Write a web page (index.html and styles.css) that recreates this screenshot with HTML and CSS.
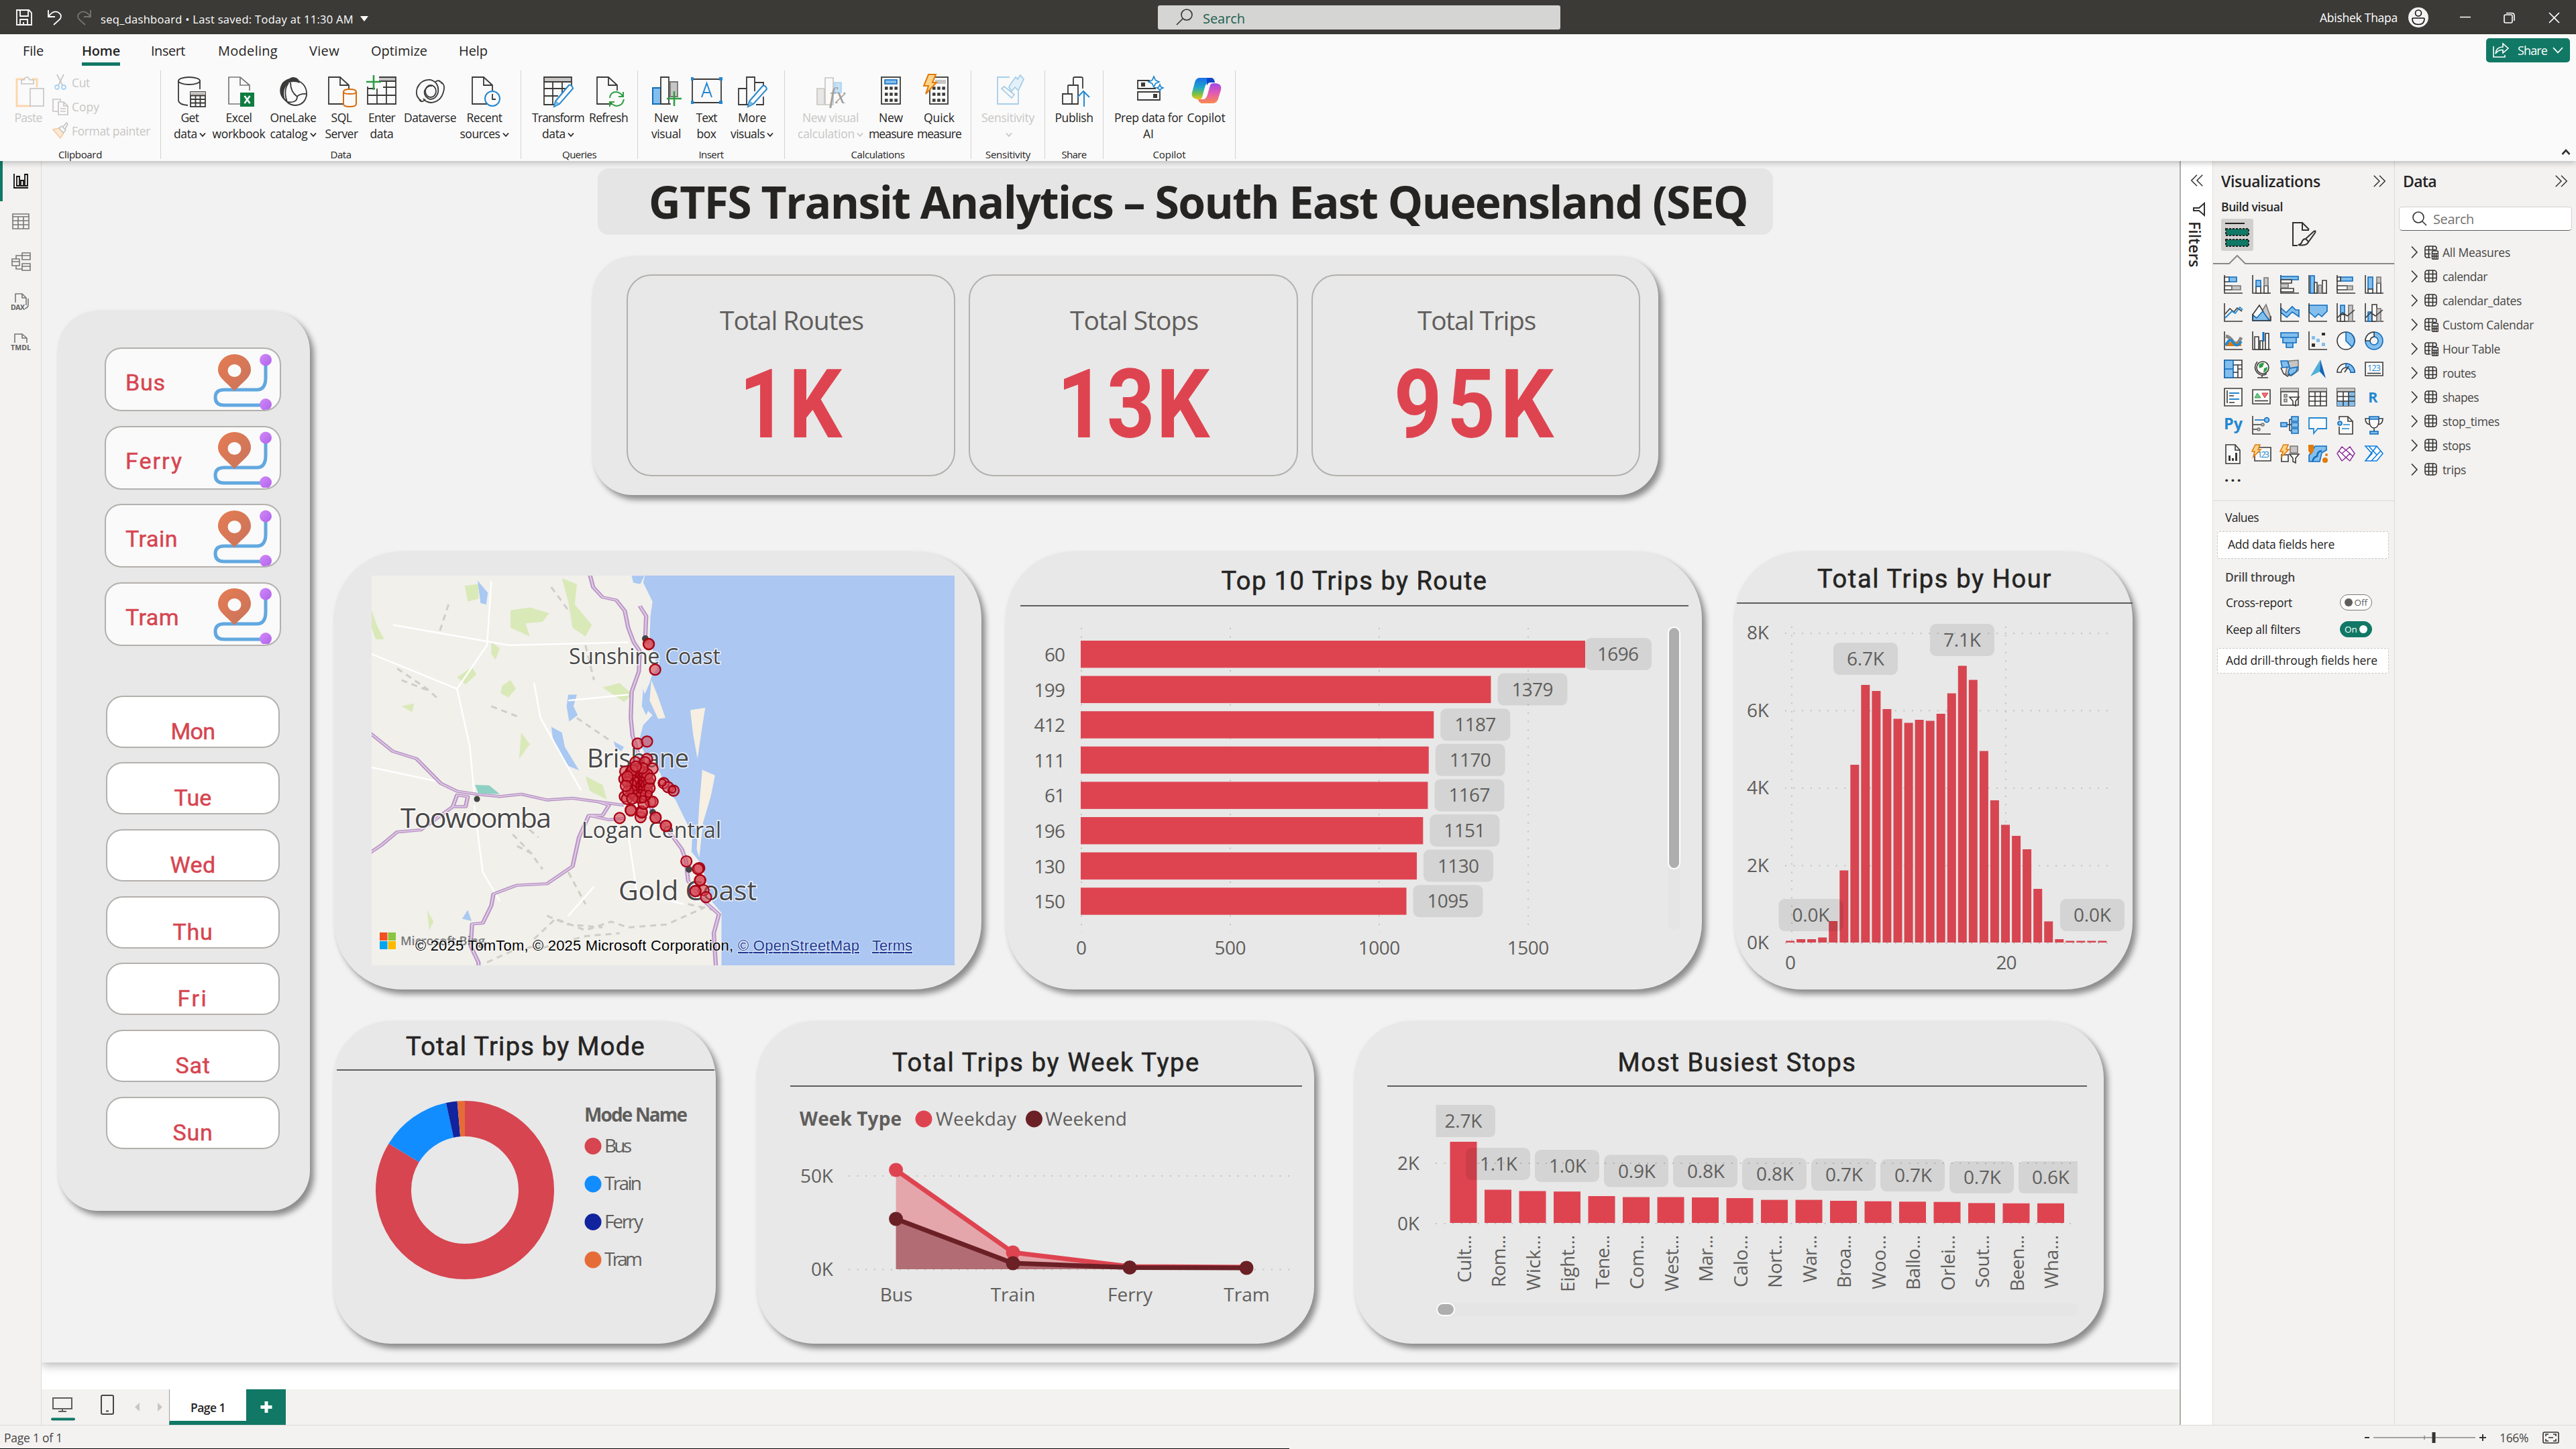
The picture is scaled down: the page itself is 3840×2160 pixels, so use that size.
FILE: index.html
```html
<!DOCTYPE html>
<html lang="en">
<head>
<meta charset="utf-8">
<title>seq_dashboard</title>
<link rel="stylesheet" href="styles.css">
</head>
<body>
<svg class="defs" width="0" height="0">
  <defs>
    <linearGradient id="pin" x1="0" y1="0" x2="1" y2="1"><stop offset="0" stop-color="#e57c52"/><stop offset="1" stop-color="#c9735c"/></linearGradient>
    <linearGradient id="dot" x1="0" y1="0" x2="1" y2="1"><stop offset="0" stop-color="#d08af8"/><stop offset="1" stop-color="#b062ea"/></linearGradient>
    <linearGradient id="cpA" x1="0" y1="0" x2="0" y2="1"><stop offset="0" stop-color="#1a6fe8"/><stop offset=".45" stop-color="#1fa6c8"/><stop offset=".75" stop-color="#7cc243"/><stop offset="1" stop-color="#f6c51c"/></linearGradient>
    <linearGradient id="cpB" x1="0" y1="0" x2="0" y2="1"><stop offset="0" stop-color="#a247e8"/><stop offset=".5" stop-color="#e35bb0"/><stop offset="1" stop-color="#fb8a4c"/></linearGradient>
    <symbol id="route" viewBox="0 0 90 90">
      <path d="M79 14V42Q79 60 66 60H17Q4 60 4 71.500Q4 83 17 83H74" fill="none" stroke="#62a8e0" stroke-width="5"/>
      <path fill-rule="evenodd" fill="url(#pin)" d="M32.500 62C20 48 8 42 8 30A24.500 23 0 0 1 57 30C57 42 45 48 32.500 62ZM32.500 22A10 9.500 0 1 0 32.500 41A10 9.500 0 1 0 32.500 22Z"/>
      <circle cx="79" cy="15.500" r="9" fill="url(#dot)"/><circle cx="79" cy="82" r="9" fill="url(#dot)"/>
    </symbol>
    <symbol id="tbl" viewBox="0 0 22 22"><rect x="2" y="2" width="17" height="17" rx="4" class="t"/><path class="t" d="M2 7.500H19M2 13.500H19M7.500 2V19M13.500 2V19"/></symbol>
    <symbol id="calc" viewBox="0 0 22 22"><path class="t" d="M19 7V5Q19 2 16 2H5Q2 2 2 5V16Q2 19 5 19H10M2 7.500H19M2 13.500H10M7.500 2V19M13.500 2V7"/><rect x="12.500" y="9" width="9" height="12.500" rx="2" class="t"/><path class="t" d="M12.500 13H21.500M15.500 13V21M18.500 13V21M12.500 17H21.500"/></symbol>
    <symbol id="more" viewBox="0 0 24 24"><path class="t" d="M3 3L12 12L3 21M12 3L21 12L12 21"/></symbol>
    <symbol id="less" viewBox="0 0 24 24"><path class="t" d="M12 3L3 12L12 21M21 3L12 12L21 21"/></symbol>
    <symbol id="exp" viewBox="0 0 12 20"><path class="t" d="M2 1.500L10 10L2 18.500"/></symbol>
    <symbol id="chev" viewBox="0 0 10 8"><path d="M1 1.500L5 6L9 1.500" fill="none" stroke="currentColor" stroke-width="1.800"/></symbol>
    <symbol id="doc" viewBox="0 0 48 52"><path class="k" d="M28 45H5V5H22L35 17V25M22 5V17H35"/></symbol>
  </defs>
</svg>

<header class="titlebar">
  <svg class="qa" width="120" height="28" viewBox="0 0 120 28">
    <path d="M2 3H20L24 7V25H2ZM7 3V12H19V3M7 25V17H18V25M12 25V21" fill="none" stroke="#fff" stroke-width="1.800"/>
    <path d="M49 3V13H59M49 13Q56 3 63 6Q71 10 66 17L57 25" fill="none" stroke="#fff" stroke-width="1.800"/>
    <path d="M112 3V13H102M112 13Q105 3 98 6Q90 10 95 17L104 25" fill="none" stroke="#777572" stroke-width="1.800"/>
  </svg>
  <span class="docname" data-w="377">seq_dashboard • Last saved: Today at 11:30 AM</span>
  <i class="caret"></i>
  <div class="gsearch"><svg width="26" height="28" viewBox="0 0 26 28"><circle cx="16" cy="10" r="8" fill="none" stroke="#333" stroke-width="1.600"/><path d="M10 16L1 25" stroke="#333" stroke-width="1.600"/></svg><span data-w="63">Search</span></div>
  <span class="user" data-w="116">Abishek Thapa</span>
  <svg class="avatar" width="30" height="30" viewBox="0 0 30 30"><circle cx="15" cy="15" r="15" fill="#f3f2f1"/><circle cx="15" cy="8.500" r="4.500" fill="none" stroke="#111" stroke-width="1.600"/><path d="M6 17Q6 16 7 16H23Q24 16 24 17Q24 25.500 15 25.500Q6 25.500 6 17Z" fill="none" stroke="#111" stroke-width="1.600"/></svg>
  <svg class="win" width="150" height="20" viewBox="0 0 150 20"><g fill="none" stroke="#fff" stroke-width="1.600"><path d="M1 9.500H17M134 3L149 18M149 3L134 18"/><rect x="67" y="6" width="12" height="12" rx="2"/><path d="M70 3.500H78Q82 3.500 82 7V15"/></g></svg>
</header>

<section class="ribbon">
  <nav class="tabs">
    <a class="t1" data-w="31">File</a><a class="t2 on" data-w="57">Home</a><a class="t3" data-w="51">Insert</a><a class="t4" data-w="89">Modeling</a><a class="t5" data-w="45">View</a><a class="t6" data-w="84">Optimize</a><a class="t7" data-w="43">Help</a>
    <button class="share"><svg width="26" height="24" viewBox="0 0 26 24" fill="none" stroke="#fff" stroke-width="1.600"><path d="M2 6V22H19V19"/><path d="M5 17Q6 7 16 7V2L24 9L16 16V11.500Q9 11 5 17Z"/></svg><span data-w="44">Share</span><svg width="16" height="10" viewBox="0 0 16 10" fill="none" stroke="#fff" stroke-width="1.800"><path d="M1 1L8 8.500L15 1"/></svg></button>
  </nav>
  <div class="groups">
    <div class="group g-clip">
      <div class="btns">
        <div class="rb off"><svg width="48" height="52" viewBox="0 0 48 52"><path d="M18 8H7V48H28" fill="none" stroke="#fbd7ae" stroke-width="3"/><path d="M30 8H37V20" fill="none" stroke="#fbd7ae" stroke-width="3"/><path class="d" d="M14 15V9H18Q19 5 22 5Q25 5 26 9H32V15Z"/><rect class="d" x="27" y="22" width="20" height="26"/></svg><span data-w="41">Paste</span></div>
        <ul class="mini">
          <li><svg width="20" height="26" viewBox="0 0 20 26"><path class="d" d="M5 1L13 17M15 1L7 17"/><circle cx="5" cy="20" r="3" class="db"/><circle cx="15" cy="20" r="3" class="db"/></svg><span data-w="27">Cut</span></li>
          <li><svg width="24" height="26" viewBox="0 0 24 26"><path class="d" d="M9 20H1V2H12V5M9 6H17L23 12V25H9ZM17 6V12H23M12 16H20M12 20H20"/></svg><span data-w="41">Copy</span></li>
          <li><svg width="24" height="26" viewBox="0 0 24 26"><path d="M1 11L10 9L17 16L12 24Z" fill="#fde8d2" stroke="#f5c9a0" stroke-width="1.500"/><path class="d" d="M10 9L14 6L20 12L16 16ZM16 7L21 1L23 3L19 10"/></svg><span data-w="117">Format painter</span></li>
        </ul>
      </div><h6 data-w="65">Clipboard</h6>
    </div>
    <div class="group g-data">
      <div class="btns">
        <div class="rb"><svg width="48" height="52" viewBox="0 0 48 52"><path class="k" d="M7 10V40Q8 46 21 47M39 10V23"/><ellipse class="k" cx="23" cy="10.500" rx="16" ry="5.500"/><rect class="w" x="25" y="27" width="22" height="22"/><path class="gf" d="M25 27H47V32H25Z"/><path class="k" d="M25 32.500H47M25 38H47M25 43.500H47M32.500 32V49M39.500 32V49"/></svg><span data-w="27">Get</span><span data-w="35">data<svg width="10" height="8"><use href="#chev"/></svg></span></div>
        <div class="rb"><svg width="48" height="52" viewBox="0 0 48 52"><path d="M28 45H9V5H26L40 17V25M26 5V17H40" fill="none" stroke="#797775" stroke-width="1.700"/><rect x="26" y="28" width="21" height="21" fill="#107c41"/><path d="M32.500 33L40.500 44M40.500 33L32.500 44" stroke="#fff" stroke-width="2.600"/></svg><span data-w="39">Excel</span><span data-w="79">workbook</span></div>
        <div class="rb"><svg width="48" height="52" viewBox="0 0 48 52"><path d="M24 5C18 8 17 11 17 14C8 22 9 34 14 42C5 36 2 26 6 17C9 10 15 8 24 5Z" fill="#3b3a39"/><path d="M16 14Q17 5 25 5Q33 6 34 14Q25 10 16 14Z" fill="#3b3a39"/><path class="k" d="M33 11Q45 18 44 32Q41 47 26 47Q16 46 12 38M20 13Q20 27 30 34Q34 29 44 30M15 42Q30 44 30 34M17 14Q9 24 15 42"/></svg><span data-w="69">OneLake</span><span data-w="56">catalog<svg width="10" height="8"><use href="#chev"/></svg></span></div>
        <div class="rb"><svg width="48" height="52" viewBox="0 0 48 52"><use href="#doc"/><path d="M27 27V45Q27 49 36 49Q46 49 46 45V27Q46 23 36.500 23Q27 23 27 27Q27 30 36.500 30Q46 30 46 27" fill="#fafafa" stroke="#d86b0b" stroke-width="2"/></svg><span data-w="31">SQL</span><span data-w="49">Server</span></div>
        <div class="rb"><svg width="48" height="52" viewBox="0 0 48 52"><path class="gf" d="M20 5H45V11H20Z"/><path class="k" d="M20 5H45V45H3V19M3 32H45M26 20H45M45 11H20M17 22V45M31 11V45M3 22H14"/><path d="M12 2V24M1 12H23" stroke="#2f9e44" stroke-width="2.600"/></svg><span data-w="40">Enter</span><span data-w="35">data</span></div>
        <div class="rb"><svg width="48" height="52" viewBox="0 0 48 52"><g class="k"><path d="M11 40Q1 34 5 21Q11 8 25 9Q38 13 36 28Q33 38 24 38Q14 34 16 25Q20 17 27 18"/><path d="M37 11Q48 14 44 27Q40 42 25 43Q17 42 14 37M32 12Q38 7 42 15M8 39Q12 44 17 38"/><ellipse cx="25" cy="26" rx="8" ry="9"/></g></svg><span data-w="78">Dataverse</span></div>
        <div class="rb"><svg width="48" height="52" viewBox="0 0 48 52"><use href="#doc" x="1"/><circle cx="36" cy="37" r="11" fill="#fafafa" stroke="#2488d0" stroke-width="2"/><path class="k" d="M36 30V38H41"/></svg><span data-w="53">Recent</span><span data-w="60">sources<svg width="10" height="8"><use href="#chev"/></svg></span></div>
      </div><h6 data-w="31">Data</h6>
    </div>
    <div class="group g-query">
      <div class="btns">
        <div class="rb"><svg width="48" height="52" viewBox="0 0 48 52"><path class="gf" d="M3 5H44V12H3Z"/><path class="k" d="M44 18V5H3V46H18M3 12H44M3 22H36M3 33H24M16 12V46M30 12V30"/><path d="M20 41L40 17Q45 16 46 22L26 45L18 49Z" fill="#fafafa" stroke="#2488d0" stroke-width="2"/><path d="M20 41L26 45L18 49Z" fill="#83beec" stroke="#2488d0"/></svg><span data-w="78">Transform</span><span data-w="35">data<svg width="10" height="8"><use href="#chev"/></svg></span></div>
        <div class="rb"><svg width="48" height="52" viewBox="0 0 48 52"><use href="#doc" x="2"/><path d="M26 36Q27 27 36 27Q42 28 45 33M46 27V34H39M47 38Q45 48 36 48Q30 47 27 42M26 49V42H33" fill="none" stroke="#2f9e44" stroke-width="2"/></svg><span data-w="58">Refresh</span></div>
      </div><h6 data-w="51">Queries</h6>
    </div>
    <div class="group g-insert">
      <div class="btns">
        <div class="rb"><svg width="48" height="52" viewBox="0 0 48 52"><path class="gf gs" d="M30 12H41V34H30Z"/><path d="M4 21H16V45H4Z" fill="#83beec" stroke="#0f6cbd" stroke-width="2"/><path class="w" d="M16 5H28V45H16Z"/><path class="k" d="M28 45H31"/><path d="M36 26V48M25 37H47" stroke="#2f9e44" stroke-width="2.600"/></svg><span data-w="36">New</span><span data-w="44">visual</span></div>
        <div class="rb"><svg width="48" height="52" viewBox="0 0 48 52"><path class="k" d="M3 8H46V43H3Z"/><path d="M1 5H5V10H1ZM43 5H48V10H43ZM1 40H5V45H1ZM43 40H48V45H43Z" fill="#2488d0"/><path d="M17 35L24.500 14L32 35M20 28H29" fill="none" stroke="#2488d0" stroke-width="2"/></svg><span data-w="31">Text</span><span data-w="29">box</span></div>
        <div class="rb"><svg width="48" height="52" viewBox="0 0 48 52"><path class="k" d="M4 22H16V46H4ZM16 46V5H28V26M28 13H41V18M16 46H20M30 46H41V34"/><path d="M20 41L40 18Q45 17 46 23L26 45L18 49Z" fill="#fafafa" stroke="#2488d0" stroke-width="2"/><path d="M20 41L26 45L18 49Z" fill="#83beec" stroke="#2488d0"/></svg><span data-w="42">More</span><span data-w="51">visuals<svg width="10" height="8"><use href="#chev"/></svg></span></div>
      </div><h6 data-w="37">Insert</h6>
    </div>
    <div class="group g-calc">
      <div class="btns">
        <div class="rb off"><svg width="56" height="52" viewBox="0 0 56 52"><path d="M8 22H19V46H8Z" fill="#e8e7e6" stroke="#c8c6c4" stroke-width="1.700"/><path d="M34 13H44V28H34Z" fill="#c7e0f4" stroke="#a9d3f2" stroke-width="1.700"/><path d="M20 6H32V46H20Z" fill="#fafafa" stroke="#c8c6c4" stroke-width="1.700"/><text x="26" y="44" class="fx">fx</text></svg><span data-w="84">New visual</span><span data-w="85">calculation<svg width="10" height="8"><use href="#chev"/></svg></span></div>
        <div class="rb"><svg width="48" height="52" viewBox="0 0 48 52"><rect class="w" x="10" y="5" width="28" height="40"/><path d="M15 9H33V15H15Z" fill="#83beec" stroke="#0f6cbd" stroke-width="1.600"/><path d="M15 21.500H34M15 30.500H34M15 39.500H34" stroke="#3b3a39" stroke-width="4.500" stroke-dasharray="4.500 2.700"/></svg><span data-w="36">New</span><span data-w="66">measure</span></div>
        <div class="rb"><svg width="48" height="52" viewBox="0 0 48 52"><rect class="w" x="10" y="5" width="27" height="40"/><path class="gf" d="M18 9H34V15H18Z"/><path d="M14 21.500H33M14 30.500H33M14 39.500H33" stroke="#3b3a39" stroke-width="4.500" stroke-dasharray="4.500 2.700"/><path d="M8 1H19L14 13H20L4 30L8 18H1Z" fill="#ffd388" stroke="#e07b0c" stroke-width="2"/></svg><span data-w="46">Quick</span><span data-w="66">measure</span></div>
      </div><h6 data-w="80">Calculations</h6>
    </div>
    <div class="group g-sens">
      <div class="btns"><div class="rb off"><svg width="48" height="52" viewBox="0 0 48 52"><g fill="none" stroke="#a6cfe8" stroke-width="1.800"><path d="M26 5H8V45H39V26"/><path d="M14 22L18 19L33 31L29 36Z"/><path d="M27 16L35 5L38 8L42 2L47 8L39 25L34 20L29 26L25 20Z" fill="#e4f1f9"/></g></svg><span data-w="79">Sensitivity</span><span><svg width="10" height="8"><use href="#chev"/></svg></span></div></div><h6 data-w="67">Sensitivity</h6>
    </div>
    <div class="group g-share">
      <div class="btns"><div class="rb"><svg width="48" height="52" viewBox="0 0 48 52"><path class="k" d="M7 30H21V45H7ZM15 30V18Q15 17 16 17H30V45H21M23 17V7Q23 5 25 5H34Q37 5 37 7V22"/><path d="M39 49V26M29 35L38 26L47 35" fill="none" stroke="#2488d0" stroke-width="2"/></svg><span data-w="57">Publish</span></div></div><h6 data-w="37">Share</h6>
    </div>
    <div class="group g-cop">
      <div class="btns">
        <div class="rb"><svg width="48" height="52" viewBox="0 0 48 52"><path class="k" d="M26 10H8V22H34V20M8 27H41V39H8Z"/><path d="M13 13H19V19H13ZM31 30H37V36H31Z" fill="#3b3a39"/><path d="M32 4L34.500 9.500L40 12L34.500 14.500L32 20L29.500 14.500L24 12L29.500 9.500ZM41 16L42.500 19.500L46 21L42.500 22.500L41 26L39.500 22.500L36 21L39.500 19.500Z" fill="#fafafa" stroke="#2488d0" stroke-width="1.700"/></svg><span data-w="102">Prep data for</span><span data-w="16">AI</span></div>
        <div class="rb"><svg width="48" height="52" viewBox="0 0 48 52"><path d="M14 6H32Q36 7 37 13H28Q24 13 22 20L18 35Q16 40 10 38Q1 36 3 28L7 13Q9 6 14 6Z" fill="url(#cpA)"/><path d="M25 6H32Q36 7 37 13H29Q26 14 25 18Z" fill="#1246c8"/><path d="M34 44H17Q13 43 12 38H20Q24 38 26 31L30 17Q31 14 36 14Q48 14 46 24L42 37Q40 44 34 44Z" fill="url(#cpB)"/></svg><span data-w="57">Copilot</span></div>
      </div><h6 data-w="49">Copilot</h6>
    </div>
    <svg class="collapse" width="14" height="10" viewBox="0 0 14 10"><path d="M1.500 8L7 2L12.500 8" fill="none" stroke="#333" stroke-width="2.600"/></svg>
  </div>
</section>

<main class="work">
  <aside class="rail">
    <div class="on"><svg width="28" height="28" viewBox="0 0 28 28"><path d="M4 3V24H25M8 7H12V21H8ZM14 13H18V21H14ZM20 4H24V21H20Z" fill="none" stroke="#111" stroke-width="1.800"/></svg></div>
    <div><svg width="28" height="28" viewBox="0 0 28 28" class="rl"><path d="M2 3H26V25H2ZM2 7H26M2 13H26M2 19H26M10 7V25M18 7V25"/></svg></div>
    <div><svg width="30" height="30" viewBox="0 0 30 30" class="rl"><path d="M2 11H13V21H2ZM2 15H13M17 2H29V12H17ZM17 6H29M17 18H29V28H17ZM17 22H29M8 11V6H17M8 21V26H17"/></svg></div>
    <div><svg width="30" height="30" viewBox="0 0 30 30" class="rl"><path d="M7 16V3H17L23 9V20M17 3V9H23M26 10V19Q26 24 21 25"/><text x="0" y="27" textLength="21">DAX</text></svg></div>
    <div><svg width="30" height="30" viewBox="0 0 30 30" class="rl"><path d="M6 16V3H17L24 9V16M17 3V9H24"/><text x="0" y="27" textLength="30">TMDL</text></svg></div>
  </aside>
  <section class="stage">
    <div class="canvas">
      <div class="card slicers">
        <ul class="modes">
          <li><span data-w="60">Bus</span><svg width="90" height="90"><use href="#route"/></svg></li>
          <li><span data-w="86">Ferry</span><svg width="90" height="90"><use href="#route"/></svg></li>
          <li><span data-w="78">Train</span><svg width="90" height="90"><use href="#route"/></svg></li>
          <li><span data-w="80">Tram</span><svg width="90" height="90"><use href="#route"/></svg></li>
        </ul>
        <ul class="days"><li data-w="66">Mon</li><li data-w="56">Tue</li><li data-w="68">Wed</li><li data-w="60">Thu</li><li data-w="46">Fri</li><li data-w="52">Sat</li><li data-w="60">Sun</li></ul>
      </div>
      <div class="board">
        <h1><span data-w="1638">GTFS Transit Analytics – South East Queensland (SEQ</span></h1>
        <div class="card kpis">
          <div class="kpi"><p data-w="214">Total Routes</p><strong data-w="156" data-sx=".88">1K</strong></div>
          <div class="kpi"><p data-w="191">Total Stops</p><strong data-w="230" data-sx=".88">13K</strong></div>
          <div class="kpi"><p data-w="176">Total Trips</p><strong data-w="246" data-sx=".88">95K</strong></div>
        </div>
        <div class="row top">
          <div class="card c-map">
            <svg id="map" width="869" height="581" viewBox="554 858 869 581">
              <rect x="554" y="858" width="869" height="581" fill="#abc7f2"/>
              <g transform="translate(490 810) scale(.6378 .4337)">
                <path fill="#f1f0eb" d="M100 100H741L735 135L757 200L752 250L750 330L762 390L768 430L755 455L750 480L738 520L735 560L757 590L735 625L725 680L738 720L760 760L775 790L790 850L810 880L830 940L850 1000L848 1060L870 1100L882 1160L895 1230L918 1270V1460H90V100Z"/>
                <path fill="#f6efe2" d="M754 470L768 520L787 600L770 603L750 540ZM845 573L880 565L872 640L862 740L852 660ZM873 778L903 797L893 870L875 960L866 1080L860 1050L866 900Z"/>
                <g class="green">
                  <path d="M425 230L470 220L515 240L500 270L460 275L470 320L425 290ZM545 120L580 140L575 210L615 280L600 320L570 290L560 200ZM318 145L350 140L350 190L325 200ZM405 490L425 470L437 500L420 530L402 515ZM300 460L335 425L345 450L320 485ZM640 495L680 480L710 520L690 545ZM100 230L115 290L130 330L110 330L100 290ZM380 340L400 360L390 400L380 380ZM600 800L640 830L650 880L610 850ZM450 650L470 690L445 740ZM170 560L200 550L195 580ZM230 1260L245 1300L235 1330ZM720 800L760 880L740 900Z"/>
                </g>
                <path fill="#a9c8f2" d="M560 520L580 520L572 560L582 590L562 612L556 560ZM520 630L545 650L552 700L585 780L560 765L538 720L524 670ZM348 128L372 170L368 210L355 205ZM708 111L738 111L728 140L712 135ZM666 680L690 700L684 715L670 700ZM312 1290L325 1260L334 1298ZM735 500L748 570L742 590L732 560Z"/>
                <g class="hill">
                  <path d="M160 430L230 500L260 540M170 470L240 510M430 1000L470 1060L500 1120M440 1040L480 1070M450 960L490 1010M520 150L560 230M600 350L620 470M280 210L260 300M380 560L450 600M580 600L660 680M480 1360L530 1290L600 1330L660 1300L700 1320L790 1310L880 1250M500 1390L600 1350L680 1340M370 1440L430 1400L500 1380M510 1280L560 1310L640 1320M560 1130L600 1240M840 1240L900 1260"/>
                </g>
                <path class="minor" d="M380 130L370 350L300 500L330 700L340 860M480 480L495 600L590 850M100 380L300 500M560 540L700 520M340 900L360 1130L400 1230M150 280L420 350L700 340M100 770L260 820M700 1000L720 1200L830 1240M620 1180L560 1280"/>
                <g class="road"><g id="roads">
                  <path d="M610 105L618 150L640 185L672 195L692 232L700 290L713 340L727 370L725 440L708 510L706 600L710 660L725 730L735 800"/>
                  <path d="M727 215L742 250L740 320L745 345"/>
                  <path d="M95 650L150 715L205 740L262 825L300 852L345 862L400 870L450 862L510 882L570 876L630 888L690 900"/>
                  <path d="M95 1065L125 1035L160 992L215 985L290 905L320 905L325 870L300 865L290 905"/>
                  <path d="M630 888L655 900L640 935L608 935L585 1010L570 1110L510 1170L440 1175L385 1205L380 1245L360 1305L335 1308L332 1385L350 1440V1460M608 935L655 950L690 945"/>
                  <path d="M735 850L760 930L800 1000L825 1050L835 1090L840 1160L870 1220L912 1275L900 1340L905 1455"/>
                </g></g>
                <use href="#roads" class="road2"/>
                <path fill="#8fd0c4" d="M342 830L375 832L400 862L350 860Z"/>
              </g>
              <g fill="#444"><circle cx="711" cy="1191" r="4.500"/><circle cx="962" cy="952" r="5"/><circle cx="973" cy="1211" r="5"/><circle cx="1027" cy="1296" r="5"/></g>
              <g class="place">
                <text x="848" y="990" textLength="226" font-size="32">Sunshine Coast</text>
                <text x="875" y="1144" textLength="152" font-size="38">Brisbane</text>
                <text x="597" y="1234" textLength="225" font-size="41">Toowoomba</text>
                <text x="867" y="1249" textLength="208" font-size="32">Logan Central</text>
                <text x="922" y="1342" textLength="206" font-size="41">Gold Coast</text>
              </g>
              <g id="pts" fill="#d64550" fill-opacity=".6" stroke="#a80013" stroke-width="2.200"></g>
              <path fill="#f25022" d="M566 1390h11.500v12H566z"/><path fill="#8bc53f" d="M578.500 1390H590v12h-11.500z"/><path fill="#00a4ef" d="M566 1403h11.500v12H566z"/><path fill="#ffb900" d="M578.500 1403H590v12h-11.500z"/>
              <text x="597" y="1409" textLength="126" font-size="18" font-weight="600" fill="#77777a" class="ui">Microsoft Bing</text>
              <g class="legal"><text x="619" y="1417" textLength="474">© 2025 TomTom, © 2025 Microsoft Corporation,</text><text x="1100" y="1417" textLength="181" class="lnk">© OpenStreetMap</text><text x="1300" y="1417" textLength="60" class="lnk">Terms</text></g>
            </svg>
          </div>
          <div class="card c-route"><h2><span data-w="397">Top 10 Trips by Route</span></h2><svg id="routeChart" width="1038" height="571" viewBox="1499 904 1038 571"></svg></div>
          <div class="card c-hour"><h2><span data-w="350">Total Trips by Hour</span></h2><svg id="hourChart" width="594" height="575" viewBox="2585 900 594 575"></svg></div>
        </div>
        <div class="row bottom">
          <div class="card c-mode"><h2><span data-w="357">Total Trips by Mode</span></h2>
            <svg width="570" height="407" viewBox="497 1596 570 407">
              <g id="donut" fill="none" stroke-width="53" transform="rotate(-90 693 1774)"></g>
              <g class="lab"><text x="871" y="1672" font-weight="700" textLength="154">Mode Name</text>
              <text x="901" y="1718" textLength="41">Bus</text><text x="901" y="1774" textLength="56">Train</text><text x="901" y="1831" textLength="58">Ferry</text><text x="901" y="1887" textLength="57">Tram</text></g>
              <circle cx="884" cy="1708.500" r="12.500" fill="#d64550"/><circle cx="884" cy="1765" r="12.500" fill="#118dff"/><circle cx="884" cy="1821.500" r="12.500" fill="#12239e"/><circle cx="884" cy="1878" r="12.500" fill="#e66c37"/>
            </svg></div>
          <div class="card c-week"><h2><span data-w="459">Total Trips by Week Type</span></h2>
            <svg width="831" height="383" viewBox="1128 1620 831 383">
              <path class="grid" d="M1265 1753H1928M1265 1892.500H1928"/>
              <path d="M1335.600 1744L1510 1867L1684 1889L1858 1889.500V1892H1335.600Z" fill="#de4450" fill-opacity=".4"/>
              <path d="M1335.600 1817L1510 1883L1684 1889.500L1858 1890V1892H1335.600Z" fill="#6b2026" fill-opacity=".42"/>
              <g fill="#de4450"><path d="M1335.600 1744L1510 1867L1684 1888L1858 1889" fill="none" stroke="#de4450" stroke-width="7"/><circle cx="1335.600" cy="1744" r="10.500"/><circle cx="1510" cy="1867" r="10.500"/><circle cx="1377" cy="1668" r="12.500"/></g>
              <g fill="#6b2026"><path d="M1335.600 1817L1510 1883L1684 1889.500L1858 1890" fill="none" stroke="#6b2026" stroke-width="7"/><circle cx="1335.600" cy="1817" r="10.500"/><circle cx="1510" cy="1883" r="10.500"/><circle cx="1684" cy="1889.500" r="10.500"/><circle cx="1858" cy="1890" r="10.500"/><circle cx="1541.500" cy="1668" r="12.500"/></g>
              <g class="lab"><text x="1192" y="1678" font-weight="700" textLength="152">Week Type</text><text x="1395" y="1678" textLength="120">Weekday</text><text x="1558" y="1678" textLength="122">Weekend</text>
              <text x="1193" y="1763" textLength="49">50K</text><text x="1209" y="1902" textLength="33">0K</text>
              <g text-anchor="middle"><text x="1336" y="1940">Bus</text><text x="1510" y="1940">Train</text><text x="1684.500" y="1940">Ferry</text><text x="1858.500" y="1940">Tram</text></g></g>
            </svg></div>
          <div class="card c-stops"><h2><span data-w="356">Most Busiest Stops</span></h2><svg id="stopChart" width="1117" height="383" viewBox="2019 1620 1117 383"></svg></div>
        </div>
      </div>
    </div>
    <footer class="pages">
      <svg width="36" height="40" viewBox="0 0 36 40"><path d="M3 5H31V21H3ZM17 21V24M11 25H23" fill="none" stroke="#605e5c" stroke-width="2"/><path d="M2 36.500H34" stroke="#117865" stroke-width="4" stroke-linecap="round"/></svg>
      <svg class="phone" width="22" height="32" viewBox="0 0 22 32"><rect x="2" y="2" width="18" height="28" rx="2" fill="none" stroke="#484644" stroke-width="2"/><path d="M9 25.500H13" stroke="#484644" stroke-width="2"/></svg>
      <svg class="arrows" width="42" height="14" viewBox="0 0 42 14"><path d="M7 0V13L0 6.500ZM34 0V13L41 6.500Z" fill="#c8c6c4"/></svg>
      <b class="page"><span data-w="52">Page 1</span></b><b class="add"><svg width="20" height="20" viewBox="0 0 20 20"><path d="M10 1V18M1.500 9.500H18.500" stroke="#fff" stroke-width="5"/></svg></b>
    </footer>
  </section>
  <aside class="filters"><svg width="22" height="22"><use href="#less"/></svg><svg width="20" height="22" viewBox="0 0 20 22"><path class="t bold" d="M18 2V20L10 13H2V9H10Z"/></svg><span>Filters</span></aside>
  <aside class="viz">
    <header><h3 data-w="148">Visualizations</h3><svg width="22" height="22"><use href="#more"/></svg></header>
    <h4 data-w="92">Build visual</h4>
    <div class="modesw">
      <div class="sel"><svg width="48" height="48" viewBox="0 0 48 48"><path d="M6 7H35" stroke="#222" stroke-width="2"/><path d="M7 15H41V25H7ZM7 31H41V41H7Z" fill="#117865" stroke="#222" stroke-width="2" stroke-dasharray="3 2"/></svg></div>
      <svg width="40" height="40" viewBox="0 0 40 40"><path class="t bold" d="M10 36H3V2H17L27 12M17 2V13H27M22 26L34 15Q38 13 36 17L26 31Q23 37 11 35Q16 34 17 29Q19 26 22 26L26 30"/></svg>
    </div>
    <svg class="notch" width="270" height="16" viewBox="0 0 270 16"><path d="M0 13H24L36 1L48 13H270" fill="none" stroke="#8a8886" stroke-width="2"/></svg>
    <div id="vizgrid" class="vizgrid"></div>
    <p class="dots">···</p>
    <div class="wells">
      <h5 data-w="50">Values</h5><div class="well first"><span data-w="159">Add data fields here</span></div>
      <h5 class="b" data-w="104">Drill through</h5>
      <p class="tg"><span data-w="99">Cross-report</span><i class="sw"><u></u><em>Off</em></i></p>
      <p class="tg"><span data-w="111">Keep all filters</span><i class="sw act"><em>On</em><u></u></i></p>
      <div class="well second"><span data-w="226">Add drill-through fields here</span></div>
    </div>
  </aside>
  <aside class="data">
    <header><h3 data-w="50">Data</h3><svg width="22" height="22"><use href="#more"/></svg></header>
    <div class="dsearch"><svg width="24" height="24" viewBox="0 0 24 24"><circle cx="10" cy="10" r="8" class="t"/><path class="t" d="M16 16L22 22"/></svg><span data-w="61">Search</span></div>
    <ul>
      <li><svg width="12" height="20"><use href="#exp"/></svg><svg width="22" height="22"><use href="#calc"/></svg><span data-w="101">All Measures</span></li>
      <li><svg width="12" height="20"><use href="#exp"/></svg><svg width="22" height="22"><use href="#tbl"/></svg><span data-w="67">calendar</span></li>
      <li><svg width="12" height="20"><use href="#exp"/></svg><svg width="22" height="22"><use href="#tbl"/></svg><span data-w="118">calendar_dates</span></li>
      <li><svg width="12" height="20"><use href="#exp"/></svg><svg width="22" height="22"><use href="#calc"/></svg><span data-w="136">Custom Calendar</span></li>
      <li><svg width="12" height="20"><use href="#exp"/></svg><svg width="22" height="22"><use href="#calc"/></svg><span data-w="86">Hour Table</span></li>
      <li><svg width="12" height="20"><use href="#exp"/></svg><svg width="22" height="22"><use href="#tbl"/></svg><span data-w="50">routes</span></li>
      <li><svg width="12" height="20"><use href="#exp"/></svg><svg width="22" height="22"><use href="#tbl"/></svg><span data-w="54">shapes</span></li>
      <li><svg width="12" height="20"><use href="#exp"/></svg><svg width="22" height="22"><use href="#tbl"/></svg><span data-w="85">stop_times</span></li>
      <li><svg width="12" height="20"><use href="#exp"/></svg><svg width="22" height="22"><use href="#tbl"/></svg><span data-w="42">stops</span></li>
      <li><svg width="12" height="20"><use href="#exp"/></svg><svg width="22" height="22"><use href="#tbl"/></svg><span data-w="35">trips</span></li>
    </ul>
  </aside>
</main>
<footer class="status"><span data-w="87">Page 1 of 1</span>
  <svg class="zoom" width="182" height="20" viewBox="0 0 182 20"><path d="M1 10H8M172 10H182M177 5V15" stroke="#333" stroke-width="2"/><path d="M14 10H166M90 7V13" stroke="#8a8886" stroke-width="1.500"/><path d="M104 2V18" stroke="#333" stroke-width="5"/></svg>
  <span class="pct" data-w="43">166%</span>
  <svg class="fit" width="26" height="18" viewBox="0 0 26 18"><rect x="1" y="1" width="23" height="16" rx="2" class="t"/><path class="t" d="M5 7V4H9M16 4H20V7M20 11V14H16M9 14H5V11M9 9H16"/></svg>
</footer>
<script src="app.js"></script>
</body>
</html>
```

FILE: styles.css
```css
*{box-sizing:border-box;margin:0;padding:0}
body{width:3840px;height:2160px;overflow:hidden;display:grid;grid-template-rows:51px 189px 1884px 36px;background:#f3f2f1;color:#252423;font-family:"Open Sans","Noto Sans",sans-serif;font-size:17.5px}
ul{list-style:none}
svg{display:block;flex:none}
.defs{position:absolute}
[data-w]{white-space:nowrap}
.t{fill:none;stroke:#323130;stroke-width:1.6}
.bold{stroke-width:2}
.k{fill:none;stroke:#3b3a39;stroke-width:1.8}
.w{fill:#fafafa;stroke:#3b3a39;stroke-width:1.8}
.gf{fill:#c8c6c4}
.gs{stroke:#797775;stroke-width:1.8}
.d{fill:#fafafa;stroke:#c8c6c4;stroke-width:1.7}
.db{fill:none;stroke:#a9d3f2;stroke-width:1.8}
.fx{font:italic 34px "Liberation Serif",serif;fill:#a19f9d}

.titlebar{background:#3b3a37;color:#fff;display:flex;align-items:center;padding-left:23px;font-size:16.5px}
.qa{margin-right:7px}
.docname{width:377px;padding-top:6px}
.caret{border:6px solid transparent;border-top:8px solid #fff;border-bottom:0;margin:4px 0 0 10px}
.gsearch{margin-left:1177px;width:600px;height:36px;border-radius:3px;background:#d5d5d3;display:flex;align-items:center;padding-left:27px;gap:14px;color:#1d5f50;font-size:20px}
.gsearch span{padding-top:3px}
.user{margin-left:1132px;width:116px;font-size:17.5px}
.avatar{margin-left:16px}
.win{margin-left:46px}

.ribbon{background:#fafafa;box-shadow:0 3px 8px rgba(0,0,0,.22);position:relative;z-index:2}
.tabs{height:54px;display:flex;align-items:flex-start;font-size:20px;padding-left:34px}
.tabs a{height:47px;padding-top:11px;line-height:27px;margin-right:48px}
.tabs .t1{width:31px;margin-right:57px}.tabs .t2{width:57px;margin-right:46px}
.tabs .t3{width:51px;margin-right:49px}.tabs .t4{width:89px;margin-right:47px}
.tabs .t5{width:45px;margin-right:47px}.tabs .t6{width:84px;margin-right:47px}.tabs .t7{width:43px}
.tabs .on{font-weight:600;border-bottom:5px solid #117865}
.share{margin:6px 9px 0 auto;width:125px;height:36px;border:0;border-radius:5px;background:#117865;color:#fff;font:18px "Open Sans",sans-serif;display:flex;align-items:center;padding-left:9px;gap:8px}
.share span{margin-left:4px}
.groups{display:flex;height:132px;position:relative}
.group{border-right:1.5px solid #d5d3d1;display:flex;flex-direction:column;justify-content:space-between}
.group h6{font-size:15px;font-weight:400;text-align:center;line-height:20px;margin-bottom:-3px;align-self:center}
.btns{display:grid;padding-top:5px;justify-content:center}
.rb{display:flex;flex-direction:column;align-items:center;line-height:24px;font-size:17.5px}
.rb>span:first-of-type{margin-top:1px}
.rb span svg{display:inline-block;margin-left:3px;vertical-align:1px}
.rb span{min-height:24px}
.off{color:#c8c6c4}
.g-clip{width:240px}.g-clip .btns{grid-template-columns:56px 150px;justify-content:start;padding-left:14px}
.mini{color:#c8c6c4;padding-left:8px;font-size:17.5px;margin-top:-5px}
.mini li{height:36px;display:flex;align-items:center;gap:5px}
.mini li svg{width:24px}
.g-data{width:537px}.g-data .btns{grid-template-columns:70px 76px 86px 58px 62px 82px 80px;justify-content:start;padding-left:8px}
.g-query{width:174px}.g-query .btns{grid-template-columns:82px 68px;justify-content:start;padding-left:14px}
.g-insert{width:219px}.g-insert .btns{grid-template-columns:64px 56px 80px;justify-content:start;padding-left:10px}
.g-calc{width:278px}.g-calc .btns{grid-template-columns:106px 74px 70px;justify-content:start;padding-left:15px}
.g-sens{width:110px}.g-share{width:87px}
.g-cop{width:197px}.g-cop .btns{grid-template-columns:108px 64px;justify-content:start;padding-left:13px}
.collapse{margin:117px 8px 0 auto}

.work{display:grid;grid-template-columns:62px 3187px 50px 271px 270px}
.rail{border-right:1.5px solid #dcdad8;display:flex;flex-direction:column}
.rail div{height:60px;display:grid;place-items:center}
.rail .on{border-left:4px solid #117865;padding-right:4px}
.rl{fill:none;stroke:#797775;stroke-width:1.6}
.rl text{font:700 10.5px "Open Sans",sans-serif;fill:#605e5c;stroke:none}
.stage{background:#fff;display:flex;flex-direction:column}
.canvas{height:1791px;background:#f2f2f2;box-shadow:0 4px 14px rgba(0,0,0,.3);clip-path:inset(0 0 -24px 0);display:flex}
.card{background:#e8e8e8;border-radius:60px;box-shadow:6px 7px 9px rgba(0,0,0,.42),0 0 5px #ececec}
.slicers{width:376px;height:1342px;margin:223px 0 0 24px;padding:55px 0 0 70px;flex:none}
.modes{display:grid;gap:21.5px}
.modes li{width:263px;height:95px;border:2px solid #b3b0ad;border-radius:25px;background:#fafafa;display:flex;justify-content:space-between;align-items:center;padding:0 10px 0 29px;overflow:hidden;color:#d64550;font:400 34px Roboto,sans-serif;-webkit-text-stroke:.5px #d64550}
.modes span{padding-top:9px}
.days{display:grid;gap:21.7px;margin:74px 0 0 2px}
.days li{width:259px;height:78px;border:2px solid #b3b0ad;border-radius:25px;background:#fff;color:#d64550;font:400 34px/102px Roboto,sans-serif;-webkit-text-stroke:.5px #d64550;text-align:center}
.board{margin-left:35px;flex:1;min-width:0}
h1{width:1752px;height:99px;margin:11px 0 0 394px;border-radius:16px;background:#e5e5e5;font-size:66px;line-height:99px;font-weight:700;padding-left:76px}
.kpis{width:1589px;height:356px;margin:32px 0 0 386px;padding:27px 27px 28px 51px;display:grid;grid-template-columns:490px 491px 490px;gap:20px}
.kpi{border:2px solid #b3b0ad;border-radius:37px;display:flex;flex-direction:column;align-items:center;padding:38px 0 0 2px}
.kpi p{font-size:39px;line-height:56px;color:#605e5c}
.kpi strong{font:700 142px/142px Roboto,sans-serif;color:#de4450;margin-top:28px}
.row{display:flex}
.top{margin-top:84px;height:653px}
.bottom{margin-top:47px;height:481px}
.top .card{border-radius:100px}
.bottom .card{border-radius:85px}
.card h2{font:400 38px/40px Roboto,sans-serif;-webkit-text-stroke:.6px #252423;text-align:center;border-bottom:2px solid #605e5c;color:#252423}
.c-map{width:965px;padding:36px 0 0 56px;margin-left:1px}
.c-route{width:1038px;margin-left:36px}.c-route h2{margin:0 20px 0 22px;height:82px;padding-top:24px}
.c-hour{width:594px;margin-left:48px}.c-hour h2{margin:0 0 0 4px;height:78px;padding-top:21px}
.c-mode{width:570px}.c-mode h2{margin:0 2px 0 5px;height:74px;padding-top:18px}
.c-week{width:831px;margin-left:61px}.c-week h2{margin:0 18px 0 50px;height:98px;padding-top:42px}
.c-stops{width:1117px;margin-left:60px}.c-stops h2{margin:0 25px 0 49px;height:98px;padding-top:42px}
.green path{fill:#d6e8b2;opacity:.9}
.hill{fill:none;stroke:#b9b9b0;stroke-width:3;stroke-dasharray:9 7;opacity:.6}
.hill path,.minor{vector-effect:non-scaling-stroke}
.minor{fill:none;stroke:#fff;stroke-width:2.5}
.road,.road2{fill:none;stroke-linejoin:round}
.road{stroke:#b995c4;stroke-width:10px}
.road2{stroke:#e2cde8;stroke-width:3.5px}
.place{font-family:"Open Sans",sans-serif;fill:#484848;stroke:#fff;stroke-width:3px;stroke-opacity:.8;paint-order:stroke;font-weight:500}
.ui{font-family:"Open Sans",sans-serif}
.legal{font:22px "Liberation Sans",Arial,sans-serif;fill:#000;paint-order:stroke;stroke:#fff;stroke-opacity:.6;stroke-width:2px}
.lnk{fill:#1f3a93;text-decoration:underline}
.lab,.lab text{font-family:"Open Sans","Noto Sans",sans-serif;font-size:28px;fill:#605e5c}
.grid{fill:none;stroke:#c4c2c0;stroke-width:2;stroke-dasharray:2 10.6}
.pages{margin-top:40px;height:53px;background:#f3f2f1;display:flex;align-items:center;padding-left:14px}
.pages>svg:first-child{margin-top:2px}
.phone{margin:-8px 0 0 37px}
.arrows{margin-left:30px}
.page{margin-left:9px;width:115px;height:53px;border-left:1.5px solid #a19f9d;background:#fff;border-bottom:6px solid #117865;font-size:17.5px;font-weight:600;text-align:center;line-height:55px}
.add{width:59px;height:53px;background:#117865;display:grid;place-items:center}

.filters{background:#fff;border-left:2px solid #b1afad;border-right:1.5px solid #e1dfdd;display:flex;flex-direction:column;align-items:center;padding-top:18px}
.filters svg:nth-child(2){margin:21px -6px 0 0}
.filters span{writing-mode:vertical-rl;font-size:23px;font-weight:600;margin:7px 6px 0 0;line-height:30px}
.viz{border-right:1.5px solid #dcdad8}
.viz header,.data header{height:60px;display:flex;align-items:center;justify-content:space-between;padding:0 11px 0 12px}
h3{font-size:23px;font-weight:600}
h4{font-size:17.500px;font-weight:600;line-height:20px;margin:-2px 0 0 12px}
.modesw{display:flex;gap:56px;margin:8px 0 0 12px;align-items:center}
.sel{background:#d2d0ce;border-radius:3px}
.notch{margin-top:6px}
.vizgrid{display:grid;grid-template-columns:repeat(6,28px);grid-auto-rows:28px;gap:14.1px 14px;padding:14px 0 0 16px}
.v{fill:none;stroke:#3b3a39;stroke-width:1.6}
.vb{fill:#83beec;stroke:#0f6cbd;stroke-width:1.6}
.vg{fill:#c8c6c4;stroke:#797775;stroke-width:1.6}
.vw{fill:#fafafa;stroke:#3b3a39;stroke-width:1.6}
.dots{font-weight:700;font-size:22px;letter-spacing:3px;line-height:30px;padding:9px 0 0 17px;height:55px}
.wells{border-top:1.500px solid #dcdad8;padding:12px 8px 0 6px}
h5{font-size:17.500px;font-weight:400;line-height:24px;padding-left:12px}
h5.b{font-weight:600;color:#484644;margin-bottom:6px}
.well{border:1.500px dashed #c8c6c4;background:#fff;border-radius:3px}
.well.first{height:41px;margin:9px 0 15px;padding-left:15px;line-height:36px}
.tg{height:40px;display:flex;justify-content:space-between;align-items:center;padding:0 25px 0 13px}
.well.second{height:38px;padding-left:12px;line-height:34px;margin-top:8px}
.sw{width:48px;height:24px;border:1.500px solid #797775;border-radius:12px;background:#fff;display:flex;align-items:center;justify-content:space-between;padding:0 6px;font-style:normal;color:#605e5c}
.sw em{font-style:normal;font-size:13.500px;line-height:20px}
.sw u{width:12px;height:12px;border-radius:6px;background:#605e5c}
.act{background:#117865;border-color:#117865;color:#fff}.act u{background:#fff}
.dsearch{margin:8px 6px 0;height:36px;border:1.500px solid #d2d0ce;border-bottom-color:#605e5c;border-radius:5px;background:#fff;display:flex;align-items:center;gap:8px;padding-left:18px;color:#757371;font-size:20px}
.data ul{padding-top:14px}
.data li{height:36.050px;display:flex;align-items:center;padding-left:23px;color:#484644}
.data li svg:nth-child(2){margin:0 6px 0 8px}

.status{border-top:1.500px solid #dcdad8;display:flex;align-items:center;padding-left:6px;color:#484644;background:linear-gradient(#000,#000) 0 100%/1922px 1px no-repeat}
.status>span:first-child{width:88px}
.zoom{margin-left:3430px}
.pct{margin-left:20px;width:43px}
.fit{margin-left:21px}
```

FILE: app.js
```js
// Tracks each label out to the width it occupies in the design.
document.querySelectorAll('[data-w]').forEach(el => {
  const range = document.createRange();
  range.selectNodeContents(el);
  const chars = el.textContent.length;
  const extra = el.querySelector('svg') ? 13 : 0;
  const sx = +(el.dataset.sx || 1);
  const gap = (el.dataset.w / sx - (range.getBoundingClientRect().width - extra)) / chars;
  el.style.letterSpacing = gap.toFixed(3) + 'px';
  if (sx !== 1) el.style.transform = `scaleX(${sx})`;
});

const grey = 'rgba(0,0,0,.085)';
const rect = (x, y, w, h, fill, r = 0) => `<rect x="${x}" y="${y}" width="${w}" height="${h}" rx="${r}" fill="${fill}"/>`;
const text = (x, y, s, w, a = 'middle') => `<text x="${x}" y="${y}" text-anchor="${a}"${w ? ` textLength="${w}"` : ''}>${s}</text>`;

// Trips by route
const routes = [[60, 1696], [199, 1379], [412, 1187], [111, 1170], [61, 1167], [196, 1151], [130, 1130], [150, 1095]];
let s = '<path class="grid" d="M1612 936V1390M1834 936V1390M2056 936V1390M2278 936V1390"/><g class="lab">';
routes.forEach(([name, n], i) => {
  const y = 955 + i * 52.6, w = n * .4434, bx = Math.min(1611 + w + 10, 2363);
  s += rect(1611, y, w, 40.5, '#de4450') + rect(bx, y - 4, i ? 104 : 99, 48, i ? grey : '#d4d4d4', 9);
  s += text(bx + (i ? 52 : 49), y + 30, n, 62) + text(1588, y + 31, name, String(name).length * 15.5, 'end');
});
[['0', 1612], ['500', 1834], ['1000', 2056], ['1500', 2278]].forEach(([t, x]) => s += text(x, 1423, t, t.length * 15.6));
s += '</g>' + rect(2486, 934, 19, 452, '#e5e5e5', 9) + '<rect x="2487" y="935" width="17" height="360" rx="8.500" fill="#aeaeae" stroke="#fff" stroke-width="2"/>';
routeChart.innerHTML = s;

// Trips by hour
const tops = [1402.5, 1400, 1400, 1397.5, 1373, 1297.5, 1140, 1021, 1030, 1057, 1071.5, 1077.5, 1073, 1074.5, 1064, 1033.5, 992.5, 1013.5, 1119.5, 1193, 1229.5, 1246, 1266, 1325, 1373.5, 1400, 1402.5, 1402.5, 1402.5, 1402.5];
s = '<path class="grid" d="M2661 944H3150M2661 1059.500H3150M2661 1175H3150M2661 1290.500H3150M2661 1406H3150M2671 934V1406M2990 934V1406"/>';
tops.forEach((t, i) => s += rect((2662 + i * 16.05).toFixed(1), t, 13, 1405 - t, '#d64550'));
s += '<g class="lab">';
[['6.7K', 2733, 958], ['7.1K', 2877, 930], ['0.0K', 2651.5, 1340], ['0.0K', 3071, 1340]].forEach(([t, x, y]) => s += rect(x, y, 96, 48, grey, 9) + text(x + 48, y + 34, t, 56));
['8K', '6K', '4K', '2K', '0K'].forEach((t, i) => s += text(2637, 953 + i * 115.6, t, 33, 'end'));
hourChart.innerHTML = s + text(2669, 1445, '0') + text(2991, 1445, '20', 31) + '</g>';

// Trips by mode: shares in degrees, clockwise from the top
let start = 0;
donut.innerHTML = [[301.4, '#d64550'], [46.4, '#118dff'], [7.2, '#12239e'], [5, '#e66c37']].map(([deg, c]) => {
  const arc = `<circle cx="693" cy="1774" r="106.500" pathLength="360" stroke="${c}" stroke-dasharray="${deg} 360" stroke-dashoffset="${-start}"/>`;
  start += deg;
  return arc;
}).join('');

// Busiest stops
const stops = [['Cult', 1702], ['Rom', 1773.5], ['Wick', 1775.5], ['Eight', 1776.2], ['Tene', 1783], ['Com', 1784.5], ['West', 1784.5], ['Mar', 1785], ['Calo', 1786], ['Nort', 1788.6], ['War', 1788.6], ['Broa', 1790], ['Woo', 1790.7], ['Ballo', 1791.3], ['Orlei', 1791.7], ['Sout', 1793.4], ['Been', 1793.8], ['Wha', 1793.8]];
const len = [71, 78, 83, 85, 80, 81, 84, 70, 78, 79, 71, 79, 81, 82, 83, 79, 84, 80];
s = '<path class="grid" d="M2140 1734H3090M2140 1824H3090"/><g class="lab">';
stops.forEach(([n, y], i) => {
  const x = 2161.5 + i * 51.5;
  s += rect(x.toFixed(1), y, 40, 1823 - y, '#de4450');
  s += `<text transform="translate(${(x + 31).toFixed(1)} 1841) rotate(-90)" text-anchor="end" textLength="${len[i]}">${n}...</text>`;
});
[['1.1K', 2185, 1711], ['1.0K', 2288, 1714], ['0.9K', 2391, 1721.5], ['0.8K', 2494, 1722], ['0.8K', 2597, 1726], ['0.7K', 2700, 1727], ['0.7K', 2803, 1728], ['0.7K', 2906, 1731]].forEach(([t, x, y]) => s += rect(x, y, 96, 48, grey, 9) + text(x + 49, y + 34, t, 56));
s += `<path fill="${grey}" d="M2140.500 1647H2220Q2229 1647 2229 1656V1686Q2229 1695 2220 1695H2140.500ZM3097 1731H3018Q3009 1731 3009 1740V1770Q3009 1779 3018 1779H3097Z"/>`;
s += text(2181.5, 1681, '2.7K', 56) + text(3057, 1765, '0.6K', 56) + text(2116, 1744, '2K', 33, 'end') + text(2116, 1834, '0K', 33, 'end') + '</g>';
s += rect(2140, 1942, 957, 20, '#e5e5e5', 9) + '<rect x="2142" y="1943" width="26" height="18" rx="9" fill="#aeaeae" stroke="#fff" stroke-width="2"/>';
stopChart.innerHTML = s;

// Stops on the map
const at = (x, y) => [490 + x * .6378, 810 + y * .4337];
const pts = [[748, 346], [748, 346], [763, 434], [722, 688], [744, 681], [744, 741], [717, 752], [739, 752], [757, 774], [693, 784], [706, 786], [691, 810], [783, 824], [793, 838], [806, 850], [780, 822, 5], [803, 846, 5], [692, 870], [697, 878], [706, 916], [706, 918], [729, 941], [731, 921], [732, 925], [680, 944], [764, 942], [764, 943], [788, 971], [788, 971], [836, 1093], [866, 1116], [863, 1119], [868, 1158], [868, 1158], [876, 1192], [857, 1195], [857, 1195], [882, 1216], [752, 888], [757, 888], [736, 895]];
for (let i = 0; i < 52; i++) {
  const a = i * 2.4, r = Math.sqrt(i / 52);
  pts.push([724 + Math.cos(a) * r * 30, 826 + Math.sin(a) * r * 62, i % 5 ? 8 : 5]);
}
document.getElementById('pts').innerHTML = pts.map(([x, y, r = 8]) => { const [a, b] = at(x, y); return `<circle cx="${a.toFixed(1)}" cy="${b.toFixed(1)}" r="${r}"/>`; }).join('');

// Visual gallery
const ax = '<path class="v" d="M1 0V27H28"/>';
const p = (c, d) => `<path class="${c}" d="${d}"/>`;
const bolt = '<path d="M5 0H12L9 7H13L2 18L4 10H0Z" fill="#ffd388" stroke="#e07b0c" stroke-width="1.600"/>';
const icons = [
  ax + p('vw', 'M1 3H8V10H1ZM1 16H12V22H1Z') + p('vb', 'M8 3H19V10H8Z') + p('vg', 'M12 16H25V22H12Z'),
  ax + p('vw', 'M6 17H13V27H6ZM18 16H24V27H18Z') + p('vb', 'M6 8H13V17H6Z') + p('vg', 'M18 4H24V16H18Z'),
  ax + p('vb', 'M1 2H27V7H1Z') + p('vw', 'M1 7H17V12H1ZM1 20H20V25H1Z') + p('vg', 'M1 13H12V19H1Z'),
  ax + p('vb', 'M3 1H9V27H3Z') + p('vw', 'M9 11H13V27H9ZM21 8H27V27H21Z') + p('vg', 'M15 15H20V27H15Z'),
  ax + p('vb', 'M6 3H24V9H6Z') + p('vw', 'M1 3H6V9H1ZM1 16H16V22H1Z') + p('vg', 'M16 16H24V22H16Z'),
  ax + p('vb', 'M5 3H12V21H5Z') + p('vw', 'M5 21H12V27H5ZM18 12H24V27H18Z') + p('vg', 'M18 3H24V12H18Z'),
  ax + p('v', 'M2 16L9 8L15 13L20 7L27 12') + '<path d="M2 22L12 12L17 15L24 6L28 10" fill="none" stroke="#2488d0" stroke-width="1.800"/>',
  p('vg', 'M14 13L21 2L27 19V26Z') + p('vw', 'M1 17L11 3L17 13L8 24Z') + p('vb', 'M1 18L7 22L16 12L26 26H1Z') + '<path class="v" d="M1 16V26H28V19"/>',
  p('vb', 'M1 7L9 14L18 5L23 10H28V20L18 13L10 21L1 14Z') + ax,
  p('vb', 'M1 3H28V12L20 20L15 16L10 21L1 13Z') + ax,
  ax + p('vb', 'M6 3H12V17H6Z') + p('vw', 'M6 17H12V27H6Z') + p('vg', 'M18 3H24V27H18Z') + p('v', 'M1 22L9 14L16 19L27 10'),
  ax + p('vb', 'M5 13H11V27H5Z') + p('vw', 'M11 2H18V27H11Z') + p('vg', 'M18 8H24V27H18Z') + p('v', 'M1 22L9 14L16 19L27 10'),
  '<path d="M3 7Q9 8 14 16Q20 22 26 9" fill="none" stroke="#8a8886" stroke-width="5"/><path d="M3 19H26" stroke="#e07b0c" stroke-width="6"/><path d="M3 21Q9 7 15 18Q20 24 26 15" fill="none" stroke="#2488d0" stroke-width="4"/>' + ax,
  ax + p('vw', 'M4 8H10V27H4ZM12 14H16V27H12ZM20 3H25V27H20Z') + '<path d="M17 1V15" stroke="#0f6cbd" stroke-width="3"/>',
  p('vb', 'M1 2H27V9H1ZM4 9H24V17H4ZM9 17H19V24H9Z'),
  ax + '<path fill="#83beec" d="M5 7H10V12H5ZM12 11H17V16H12ZM20 17H25V22H20Z"/><path fill="#323130" d="M20 2H25V6H20ZM5 18H10V23H5Z"/>',
  '<circle class="vw" cx="14" cy="14" r="13"/>' + p('vb', 'M14 1A13 13 0 0 1 23 23L14 14Z'),
  '<circle class="vb" cx="14" cy="14" r="13"/><circle cx="14" cy="14" r="6" fill="#f3f2f1" stroke="#0f6cbd" stroke-width="1.600"/>' + p('vw', 'M14 1A13 13 0 0 0 1 14H8A6 6 0 0 1 14 8Z'),
  p('vw', 'M1 1H27V27H1Z') + p('vb', 'M1 1H14V14H1ZM1 14H14V27H1Z') + p('v', 'M14 8H27M21 8V27M14 19H21M21 14H27'),
  '<circle class="vw" cx="16" cy="12" r="9"/><path fill="#2f9e44" d="M10 8Q14 4 18 5L16 11L11 13ZM18 13L23 11Q23 18 17 19Z"/>' + p('v', 'M8 3Q1 12 8 20Q15 26 22 21M15 23V26M8 27H24'),
  p('vg', 'M13 2L27 1V16L17 24L8 21L10 12Z') + p('vb', 'M1 2H11L14 11L3 12ZM14 13L26 11L24 18L15 24L12 19Z') + p('v', 'M1 12L5 21L11 25L14 22'),
  '<path d="M18 0L3 25L17 18Z" fill="#4fb0d8"/><path d="M18 0L17 18L26 28Z" fill="#1766b8"/>',
  p('vw', 'M1 19A13 13 0 0 1 27 19H21A7 7 0 0 0 7 19Z') + p('vb', 'M14 6A13 13 0 0 1 27 19H21A7 7 0 0 0 14 12Z') + p('v', 'M12 19L18 10'),
  p('vw', 'M1 4H27V24H1Z') + '<text x="4" y="17" font-size="12.500" textLength="20" fill="#2488d0">123</text><path class="v" d="M4 20.500H24"/>',
  p('vw', 'M1 1H27V27H1Z') + p('v', 'M5 4V23M8 12H15M8 22H16') + '<path d="M8 8H23M8 17H23" stroke="#2488d0" stroke-width="2"/>',
  p('vw', 'M1 3H27V24H1Z') + '<path d="M4 15L8 8L13 15Z" fill="#74c686" stroke="#2f9e44"/><path d="M15 8H24L19 15Z" fill="#f1707b" stroke="#d13438"/><path class="v" d="M4 19.500H24"/>',
  p('vw', 'M1 1H27V26H1Z') + '<path class="gf" d="M1 1H27V6H1Z"/>' + p('v', 'M1 6H27') + p('vg', 'M6 10H10V14H6ZM6 17H10V21H6Z') + p('vw', 'M14 14H28L23 20V27L19 25V20Z'),
  p('vw', 'M1 1H27V27H1Z') + '<path class="gf" d="M1 1H27V6H1Z"/>' + p('v', 'M1 6H27M1 13H27M1 20H27M10 6V27M18 6V27'),
  p('vw', 'M1 1H27V27H1Z') + '<path class="gf" d="M1 1H27V6H1Z"/><path fill="#83beec" d="M18 6H27V27H1V20H18Z"/>' + p('v', 'M1 6H27M1 13H27M1 20H27M10 6V27M18 6V27'),
  '<text x="5" y="22" font-size="22" font-weight="700" fill="#2488d0">R</text>',
  '<text x="0" y="20" font-size="23" font-weight="700" textLength="28" lengthAdjust="spacingAndGlyphs" fill="#2488d0">Py</text>',
  ax + p('vb', 'M4 6H18') + '<circle class="vb" cx="22" cy="6" r="3.500"/>' + p('v', 'M2 13H15M2 20H9') + '<circle class="vg" cx="16" cy="13" r="2"/><circle class="vg" cx="10" cy="20" r="2"/>',
  p('v', 'M10 13H17M14 5V22M14 5H17M14 22H17') + p('vb', 'M1 10H10V16H1ZM17 1H27V8H17ZM17 10H27V17H17ZM17 19H27V26H17Z'),
  '<path d="M1 3H27V19H14L8 26V19H1Z" fill="#fafafa" stroke="#2488d0" stroke-width="1.800"/>',
  p('vw', 'M4 6V1H17L24 8V27H4V16') + p('v', 'M17 1V8H24') + '<circle class="vb" cx="5" cy="11" r="3"/><path d="M10 13H20M8 19H19" stroke="#2488d0" stroke-width="1.600"/>',
  p('vw', 'M7 2H21V9Q20 18 14 18Q8 18 7 9ZM7 4H1Q1 12 8 13M21 4H27Q27 12 20 13M14 18V23') + p('vb', 'M7 1H21V5H7ZM8 23H20V27H8Z'),
  p('vw', 'M3 0H17L24 8V28H3Z') + p('v', 'M17 0V8H24') + '<path fill="#3b3a39" d="M7 16H10V24H7ZM12 20H15V24H12ZM17 12H20V24H17Z"/>',
  p('vw', 'M4 4H28V24H4Z') + '<text x="8" y="19" font-size="13" textLength="18" fill="#2488d0">123</text>' + bolt,
  p('vg', 'M15 2H26V12H15Z') + p('vw', 'M2 15H12V25H2ZM14 14H28L23 20V27L19 25V20Z') + bolt,
  '<path d="M1 16L10 2H27V8L20 12L17 25H1Z" fill="#83beec" stroke="#0f6cbd" stroke-width="1.600"/><path d="M20 9Q13 10 13 17Q8 18 6 25" fill="none" stroke="#0f6cbd" stroke-width="2.500"/><path d="M0 0H8V9L4 15L0 9Z" fill="#e07b0c"/><circle cx="25" cy="23" r="4" fill="#e07b0c"/><circle cx="27" cy="15" r="2" fill="#e07b0c"/>',
  '<path d="M8 3L14 8L20 3L27 13L20 24L14 19L8 24L1 13ZM8 13L14 8L20 13L14 19ZM14 8L20 3M8 13L3 9M20 13L25 18" fill="#fff" stroke="#8c2f99" stroke-width="1.500"/>',
  '<path d="M1 2H18L27 13L18 24H1L11 13ZM6 2L18 15M1 24L18 2M10 24L24 9" fill="#fff" stroke="#0f7fe0" stroke-width="1.600"/>'
];
vizgrid.innerHTML = icons.map(i => `<svg width="28" height="28" viewBox="0 0 28 28" overflow="visible">${i}</svg>`).join('');
```
